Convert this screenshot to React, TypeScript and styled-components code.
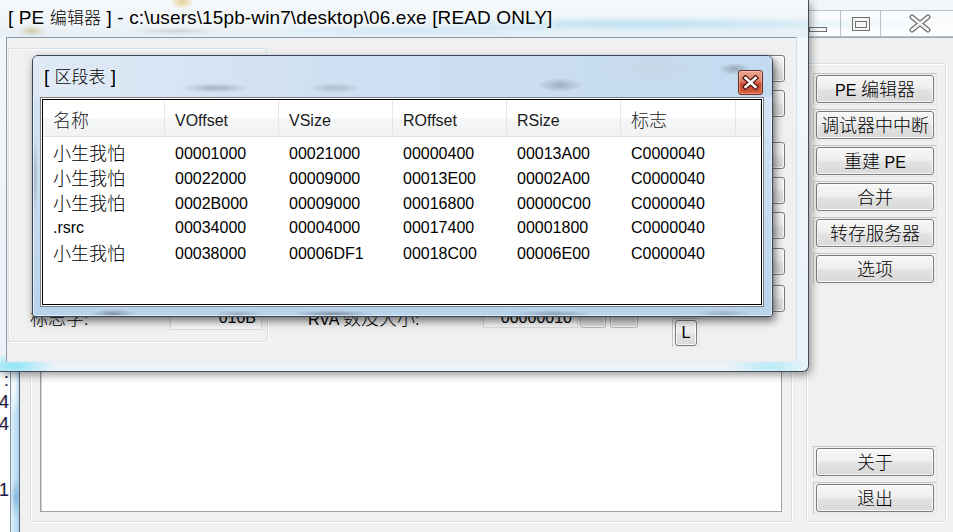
import React from "react";
import styled, { createGlobalStyle } from "styled-components";

const GlobalStyle = createGlobalStyle`
  html, body { margin: 0; padding: 0; background: #ffffff; }
  body { font-family: "Liberation Sans", "Noto Sans CJK SC", sans-serif; overflow: hidden; }
  #root { width: 953px; height: 532px; }
  * { box-sizing: border-box; }
`;

const CJK_RE = /([\u3000-\u9fff\uff00-\uffef]+)/;

const Cjk = styled.span<{ $size?: number }>`
  font-family: "Noto Sans CJK SC", sans-serif;
  font-size: ${(p) => p.$size ?? 18}px;
  font-weight: 300;
`;

const Run = styled.span`
  white-space: pre;
`;

function T({ text, cjk }: { text: string; cjk?: number }) {
  const parts = text.split(CJK_RE);
  return (
    <Run>
      {parts.map((p, i) =>
        i % 2 === 1 ? (
          <Cjk key={i} $size={cjk}>
            {p}
          </Cjk>
        ) : (
          <React.Fragment key={i}>{p}</React.Fragment>
        )
      )}
    </Run>
  );
}

/* ---------- desktop ---------- */
const Desktop = styled.div`
  position: relative;
  width: 953px;
  height: 532px;
  overflow: hidden;
  background: #ffffff;
  font-family: "Liberation Sans", "Noto Sans CJK SC", sans-serif;
`;

const BackWindow = styled.div`
  position: absolute;
  left: -30px;
  top: 369px;
  width: 40px;
  height: 163px;
  background: #ffffff;
  display: flex;
  flex-direction: column;
  align-items: flex-end;
  padding-right: 1px;
  font-size: 18px;
  line-height: 22px;
  color: #161a4a;
  text-shadow: -1px 0 0 rgba(220, 120, 30, 0.35);
`;

const BackLine = styled.div`
  height: 22px;
  white-space: nowrap;
`;

/* ---------- main window (back) ---------- */
const MainWindow = styled.div`
  position: absolute;
  left: 10px;
  top: 0;
  width: 950px;
  height: 545px;
  display: flex;
  flex-direction: column;
  background: linear-gradient(#eef3f7, #f5f8fb 40px);
`;

const MainCaption = styled.div`
  height: 37px;
  display: flex;
  justify-content: flex-end;
  padding: 10px 2px 0 0;
  background:
    radial-gradient(ellipse 120px 6px at 820px 24px, rgba(180, 220, 240, 0.6), transparent),
    linear-gradient(#f1f5f8, #f6f9fb);
`;

const CaptionButtons = styled.div`
  display: flex;
  height: 27px;
  border: 1px solid rgba(110, 125, 140, 0.45);
  border-right: none;
  background: rgba(255, 255, 255, 0.55);
`;

const CapBtn = styled.div<{ $w: number; $pt?: number }>`
  width: ${(p) => p.$w}px;
  height: 100%;
  display: flex;
  align-items: ${(p) => (p.$pt ? "flex-start" : "center")};
  justify-content: center;
  padding-top: ${(p) => p.$pt ?? 0}px;
  & + & {
    border-left: 1px solid rgba(110, 125, 140, 0.45);
  }
`;

const MainBody = styled.div`
  flex: 1;
  display: flex;
`;

const SideFrame = styled.div`
  width: 10px;
  border-left: 1px solid #8596a6;
  border-right: 1px solid #56636f;
  background:
    radial-gradient(ellipse 6px 30px at 3px 350px, rgba(255, 255, 255, 0.9), transparent),
    radial-gradient(ellipse 6px 20px at 5px 460px, rgba(80, 150, 200, 0.5), transparent),
    linear-gradient(to right, #e2f2fa, #a9d2ec);
`;

const MainClient = styled.div`
  flex: 1;
  background: #f0f0f0;
  border-top: 1px solid #9aa7b3;
  display: flex;
  align-items: flex-start;
  padding: 25px 0 0 10px;
  gap: 14px;
`;

const GroupBox = styled.div<{ $w: number; $h: number }>`
  width: ${(p) => p.$w}px;
  height: ${(p) => p.$h}px;
  border: 1px solid #d5dfe5;
  border-radius: 3px;
  box-shadow: inset 1px 1px 0 #ffffff, 1px 1px 0 #ffffff;
`;

const BottomListGroup = styled(GroupBox)`
  padding: 9px;
  display: flex;
`;

const WhiteList = styled.div`
  flex: 1;
  background: #ffffff;
  border: 1px solid #a0a0a0;
  box-shadow: inset 1px 1px 0 #d0d0d0;
`;

const ButtonGroup = styled(GroupBox)`
  display: flex;
  flex-direction: column;
  gap: 4px;
  padding: 9px 8px 7px 6px;
`;

const Spacer = styled.div`
  flex: 1;
`;

const BtnCell = styled.div<{ $w?: number }>`
  width: ${(p) => (p.$w ? `${p.$w}px` : "auto")};
  padding: 1px 2px;
  border: 1px solid;
  border-color: #c6c6c6 #e6e6e6 #e6e6e6 #c6c6c6;
`;

const Btn = styled.div<{ $h?: number; $w?: number }>`
  height: ${(p) => p.$h ?? 28}px;
  width: ${(p) => (p.$w ? `${p.$w}px` : "auto")};
  border: 1px solid #7c7c7c;
  border-radius: 3px;
  background: linear-gradient(#f7f7f7 0%, #efefef 45%, #e2e2e2 55%, #d9d9d9 100%);
  box-shadow: inset 0 0 0 1px rgba(255, 255, 255, 0.8);
  display: flex;
  align-items: center;
  justify-content: center;
  font-size: 16px;
  line-height: 20px;
  color: #000000;
  white-space: nowrap;
`;

/* ---------- PE editor window ---------- */
const PEWindow = styled.div`
  position: absolute;
  left: 0;
  top: 0;
  width: 809px;
  height: 372px;
  border-right: 1px solid #3f4c5a;
  border-bottom: 1px solid #3f4c5a;
  border-bottom-right-radius: 6px;
  background:
    radial-gradient(ellipse 40px 12px at 14px 366px, rgba(110, 225, 245, 0.75), transparent),
    radial-gradient(ellipse 40px 12px at 770px 366px, rgba(150, 230, 245, 0.6), transparent),
    linear-gradient(#f3f7fa, #eaf2f8);
  box-shadow: 2px 3px 9px rgba(0, 0, 0, 0.4);
  display: flex;
  flex-direction: column;
  padding: 0 11px 9px 6px;
`;

const PECaption = styled.div`
  height: 37px;
  margin: 0 -11px 0 -6px;
  padding: 6px 0 0 8px;
  font-size: 19px;
  line-height: 22px;
  letter-spacing: 0.12px;
  color: #000000;
  text-shadow: 0 0 6px #ffffff, 0 0 10px #ffffff;
  white-space: nowrap;
  background:
    radial-gradient(ellipse 12px 7px at 182px 2px, rgba(215, 175, 60, 0.55), transparent),
    radial-gradient(ellipse 14px 6px at 32px 31px, rgba(185, 165, 90, 0.5), transparent),
    radial-gradient(ellipse 45px 4px at 175px 31px, rgba(120, 130, 140, 0.25), transparent),
    radial-gradient(ellipse 260px 8px at 640px 24px, rgba(150, 210, 238, 0.55), transparent),
    radial-gradient(ellipse 160px 6px at 420px 30px, rgba(170, 215, 240, 0.4), transparent),
    linear-gradient(#f6f9fb, #eef4f8 60%, #e5eff6);
`;

const PEClient = styled.div`
  flex: 1;
  display: flex;
  align-items: flex-start;
  background: #f0f0f0;
  border-top: 1px solid #8e9aa6;
  border-left: 1px solid #8e9aa6;
  border-right: 1px solid #d6dee5;
  border-bottom: 1px solid #e4eaef;
  padding: 10px 0 0 1px;
`;

const FieldGroup = styled(GroupBox)`
  display: flex;
  flex-direction: column;
  justify-content: flex-end;
  padding: 0 5px 11px 21px;
`;

const FieldRow = styled.div<{ $h: number }>`
  height: ${(p) => p.$h}px;
  display: flex;
  align-items: center;
  font-size: 16px;
  line-height: 20px;
  color: #000000;
  white-space: nowrap;
`;

const FieldLabel = styled.div<{ $w?: number }>`
  width: ${(p) => (p.$w ? `${p.$w}px` : "auto")};
  flex: ${(p) => (p.$w ? "none" : "1")};
`;

const TextBox = styled.div<{ $w: number }>`
  width: ${(p) => p.$w}px;
  height: 100%;
  background: #f7f7f7;
  border: 1px solid #d9d9d9;
  display: flex;
  align-items: center;
  justify-content: flex-end;
  padding-right: 5px;
  font-size: 16px;
`;

const MiniBtn = styled(Btn)`
  margin-left: ${(p) => (p.$w === 26 ? 2 : 4)}px;
  border-color: #b8b8b8;
`;

const MidArea = styled.div`
  flex: 1;
  align-self: stretch;
  display: flex;
  flex-direction: column;
  justify-content: flex-end;
  padding: 0 0 33px 40px;
`;

const SideButtons = styled.div`
  width: 113px;
  margin-right: 11px;
  padding-top: 7px;
  display: flex;
  flex-direction: column;
  gap: 8px;
`;

const SideBtn = styled(Btn)<{ $mt?: number }>`
  margin-top: ${(p) => p.$mt ?? 0}px;
`;

const LCell = styled(BtnCell)`
  align-self: flex-start;
  margin-top: -2px;
  padding: 1px 2px 0 2px;
`;

/* ---------- section table dialog ---------- */
const Dialog = styled.div`
  position: absolute;
  left: 32px;
  top: 55px;
  width: 741px;
  height: 262px;
  border: 1px solid #39475a;
  border-radius: 6px 6px 3px 3px;
  padding: 0 8px 9px 7px;
  display: flex;
  flex-direction: column;
  box-shadow: 2px 4px 9px rgba(0, 0, 0, 0.55), inset 0 0 0 1px rgba(255, 255, 255, 0.55);
  background:
    radial-gradient(ellipse 22px 5px at 80px 258px, rgba(60, 70, 80, 0.45), transparent),
    radial-gradient(ellipse 25px 4px at 205px 258px, rgba(90, 100, 110, 0.35), transparent),
    radial-gradient(ellipse 40px 4px at 300px 258px, rgba(60, 70, 80, 0.45), transparent),
    radial-gradient(ellipse 40px 4px at 520px 258px, rgba(60, 70, 80, 0.35), transparent),
    radial-gradient(ellipse 30px 5px at 690px 258px, rgba(90, 100, 110, 0.3), transparent),
    radial-gradient(ellipse 3px 40px at 2px 120px, rgba(80, 90, 100, 0.3), transparent),
    linear-gradient(#d6e6f5, #c6dbef 60%, #b9d3ed);
`;

const DialogCaption = styled.div`
  height: 41px;
  display: flex;
  align-items: flex-end;
  margin: 0 -8px 0 -7px;
  padding: 0 9px 2px 11px;
  background:
    radial-gradient(ellipse 36px 5px at 182px 32px, rgba(80, 90, 100, 0.35), transparent),
    radial-gradient(ellipse 28px 5px at 302px 32px, rgba(100, 110, 120, 0.3), transparent),
    radial-gradient(ellipse 22px 7px at 527px 29px, rgba(70, 80, 95, 0.35), transparent),
    radial-gradient(ellipse 50px 16px at 617px 12px, rgba(200, 210, 220, 0.5), transparent),
    radial-gradient(ellipse 16px 6px at 702px 13px, rgba(60, 70, 80, 0.35), transparent),
    linear-gradient(to right, #dfeaf6, #cfe0f2 40%, #c4daf0);
  border-radius: 5px 5px 0 0;
`;

const DialogTitle = styled.div`
  flex: 1;
  margin-bottom: 8px;
  font-size: 19px;
  line-height: 20px;
  color: #000000;
  text-shadow: 0 0 6px #ffffff;
  white-space: nowrap;
`;

const CloseBtn = styled.div`
  width: 25px;
  height: 25px;
  border: 1px solid #6b2a1c;
  border-radius: 3px;
  background: linear-gradient(#eba898 0%, #df8167 42%, #c8462b 58%, #d2603f 100%);
  box-shadow: inset 0 0 0 1px rgba(255, 220, 210, 0.45);
  display: flex;
  align-items: center;
  justify-content: center;
`;

const ListOuter = styled.div`
  flex: 1;
  border: 1px solid #7e7e7e;
  padding: 1px;
  background: #ffffff;
  display: flex;
`;

const ListInner = styled.div`
  flex: 1;
  border: 1px solid #000000;
  background: #ffffff;
  display: flex;
  flex-direction: column;
  overflow: hidden;
`;

const COLS = "122px 114px 114px 114px 114px 115px 1fr";

const HeaderRow = styled.div`
  display: grid;
  grid-template-columns: ${COLS};
  height: 37px;
  background: linear-gradient(#ffffff 0%, #ffffff 50%, #f6f7f8 51%, #f1f2f4 100%);
  border-bottom: 1px solid #dcdfe3;
`;

const HeaderCell = styled.div`
  display: flex;
  align-items: center;
  padding: 5px 0 0 10px;
  border-right: 1px solid #e3e6ea;
  font-size: 16px;
  line-height: 20px;
  color: #1a1a1a;
  white-space: nowrap;
`;

const Body = styled.div`
  padding-top: 3px;
  display: flex;
  flex-direction: column;
`;

const Row = styled.div`
  display: grid;
  grid-template-columns: ${COLS};
  height: 25px;
  align-items: center;
`;

const Cell = styled.div`
  padding-left: 10px;
  font-size: 16px;
  line-height: 25px;
  color: #000000;
  white-space: nowrap;
`;

const headers = ["名称", "VOffset", "VSize", "ROffset", "RSize", "标志", ""];

const rows = [
  ["小生我怕", "00001000", "00021000", "00000400", "00013A00", "C0000040"],
  ["小生我怕", "00022000", "00009000", "00013E00", "00002A00", "C0000040"],
  ["小生我怕", "0002B000", "00009000", "00016800", "00000C00", "C0000040"],
  [".rsrc", "00034000", "00004000", "00017400", "00001800", "C0000040"],
  ["小生我怕", "00038000", "00006DF1", "00018C00", "00006E00", "C0000040"],
];

const topButtons = ["PE 编辑器", "调试器中中断", "重建 PE", "合并", "转存服务器", "选项"];
const bottomButtons = ["关于", "退出"];

const X_PATH = "M3.5 3 L13.5 12 M13.5 3 L3.5 12";
const CAP_X = "M4 3 L20 16 M20 3 L4 16";

export default function App() {
  return (
    <>
      <GlobalStyle />
      <Desktop>
        <BackWindow>
          <BackLine>:</BackLine>
          <BackLine>4</BackLine>
          <BackLine>4</BackLine>
          <BackLine />
          <BackLine />
          <BackLine>1</BackLine>
        </BackWindow>

        <MainWindow>
          <MainCaption>
            <CaptionButtons>
              <CapBtn $w={44} $pt={16}>
                <svg width="18" height="5" viewBox="0 0 18 5">
                  <rect x="0.5" y="0.5" width="17" height="4" fill="#f6f6f6" stroke="#707070" />
                </svg>
              </CapBtn>
              <CapBtn $w={40}>
                <svg width="18" height="14" viewBox="0 0 18 14">
                  <rect x="0.5" y="0.5" width="17" height="13" fill="#f6f6f6" stroke="#707070" />
                  <rect x="3.5" y="4.5" width="11" height="6" fill="none" stroke="#707070" />
                </svg>
              </CapBtn>
              <CapBtn $w={78}>
                <svg width="24" height="19" viewBox="0 0 24 19">
                  <path d={CAP_X} stroke="#707070" strokeWidth="5" strokeLinecap="round" />
                  <path d={CAP_X} stroke="#f6f6f6" strokeWidth="2.6" strokeLinecap="round" />
                </svg>
              </CapBtn>
            </CaptionButtons>
          </MainCaption>
          <MainBody>
            <SideFrame />
            <MainClient>
              <BottomListGroup $w={762} $h={459}>
                <WhiteList />
              </BottomListGroup>
              <ButtonGroup $w={140} $h={459}>
                {topButtons.map((b) => (
                  <BtnCell key={b}>
                    <Btn>
                      <T text={b} />
                    </Btn>
                  </BtnCell>
                ))}
                <Spacer />
                {bottomButtons.map((b) => (
                  <BtnCell key={b}>
                    <Btn>
                      <T text={b} />
                    </Btn>
                  </BtnCell>
                ))}
              </ButtonGroup>
            </MainClient>
          </MainBody>
        </MainWindow>

        <PEWindow>
          <PECaption>
            <T text="[ PE 编辑器 ] - c:\users\15pb-win7\desktop\06.exe [READ ONLY]" cjk={17} />
          </PECaption>
          <PEClient>
            <FieldGroup $w={260} $h={294}>
              <FieldRow $h={24}>
                <FieldLabel>
                  <T text="标志字:" />
                </FieldLabel>
                <TextBox $w={92}>010B</TextBox>
              </FieldRow>
            </FieldGroup>
            <MidArea>
              <FieldRow $h={20}>
                <FieldLabel $w={175}>
                  <T text="RVA 数及大小:" />
                </FieldLabel>
                <TextBox $w={95}>00000010</TextBox>
                <MiniBtn $w={26} $h={20} />
                <MiniBtn $w={28} $h={20} />
              </FieldRow>
            </MidArea>
            <SideButtons>
              <SideBtn $h={27} />
              <SideBtn $h={27} />
              <SideBtn $h={27} $mt={17} />
              <SideBtn $h={27} />
              <SideBtn $h={27} />
              <SideBtn $h={27} $mt={1} />
              <SideBtn $h={27} $mt={2} />
              <LCell $w={28}>
                <Btn $h={26}>L</Btn>
              </LCell>
            </SideButtons>
          </PEClient>
        </PEWindow>

        <Dialog>
          <DialogCaption>
            <DialogTitle>
              <T text="[ 区段表 ]" cjk={17} />
            </DialogTitle>
            <CloseBtn>
              <svg width="17" height="15" viewBox="0 0 17 15">
                <path d={X_PATH} stroke="#4a130a" strokeWidth="5" strokeLinecap="square" />
                <path d={X_PATH} stroke="#ffffff" strokeWidth="2.6" strokeLinecap="square" />
              </svg>
            </CloseBtn>
          </DialogCaption>
          <ListOuter>
            <ListInner>
              <HeaderRow>
                {headers.map((h, i) => (
                  <HeaderCell key={i}>
                    <T text={h} />
                  </HeaderCell>
                ))}
              </HeaderRow>
              <Body>
                {rows.map((r, i) => (
                  <Row key={i}>
                    {r.map((c, j) => (
                      <Cell key={j}>
                        <T text={c} />
                      </Cell>
                    ))}
                  </Row>
                ))}
              </Body>
            </ListInner>
          </ListOuter>
        </Dialog>
      </Desktop>
    </>
  );
}
